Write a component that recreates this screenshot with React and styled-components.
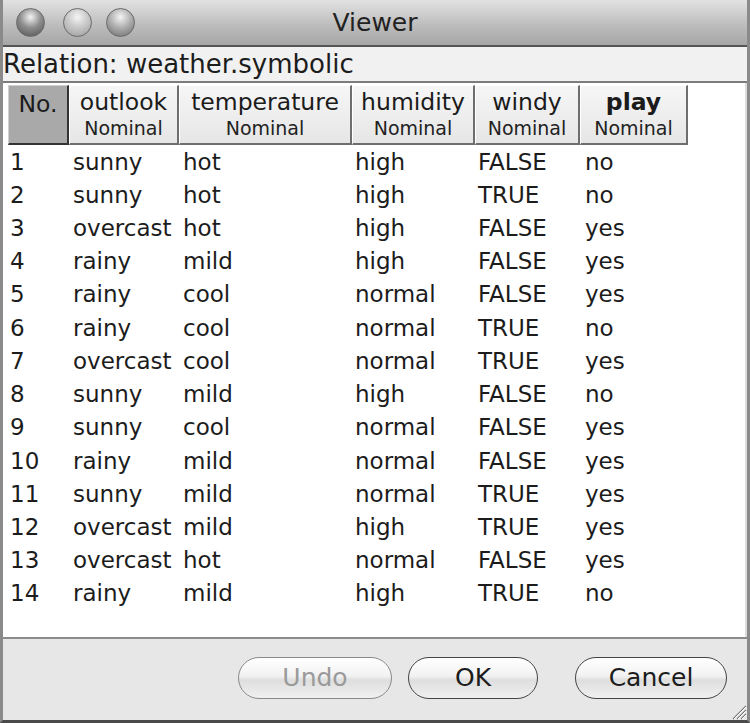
import React from 'react';
import styled, { createGlobalStyle } from 'styled-components';

const GlobalStyle = createGlobalStyle`
	html, body {
		margin: 0;
		padding: 0;
		background: #7a7a7a;
	}
	body {
		font-family: "DejaVu Sans", "Liberation Sans", sans-serif;
		color: #1a1a1a;
	}
`;

const Window = styled.div`
	width: 750px;
	height: 723px;
	display: flex;
	flex-direction: column;
	background: #e9e9e9;
	box-sizing: border-box;
	border-left: 3px solid #8a8a8a;
	border-right: 3px solid #8a8a8a;
	border-bottom: 3px solid #4a4a4a;
	overflow: hidden;
`;

const TitleBar = styled.div`
	height: 45px;
	flex: none;
	display: flex;
	align-items: center;
	position: relative;
	background: linear-gradient(#e2e2e2, #bdbdbd 55%, #a6a6a6);
	border-bottom: 2px solid #555;
	margin: 0 -3px;
	padding-left: 16px;
`;

const Light = styled.div`
	width: 29px;
	height: 29px;
	border-radius: 50%;
	box-sizing: border-box;
	border: 1px solid #6a6a6a;
	background: radial-gradient(circle at 50% 30%, #f4f4f4 0%, ${p => p.$tone} 45%, ${p => p.$edge} 100%);
	margin-right: ${p => p.$gap || 0}px;
`;

const Title = styled.div`
	position: absolute;
	left: 0;
	right: 0;
	text-align: center;
	font-size: 25px;
	color: #222;
	pointer-events: none;
`;

const RelationBar = styled.div`
	height: 34px;
	flex: none;
	display: flex;
	align-items: center;
	font-size: 26px;
	background: #f1f1f1;
	padding-left: 0;
	border-bottom: 2px solid #7c7c7c;
	color: #1c1c1c;
`;

const TablePanel = styled.div`
	flex: 1;
	background: #fff;
	padding: 2px 0 0 5px;
	border-right: 2px solid #dcdcdc;
`;

const Row = styled.div`
	display: flex;
	height: ${p => (p.$head ? '60px' : '33.23px')};
	align-items: center;
`;

const HeadCell = styled.div`
	width: ${p => p.$w}px;
	height: 60px;
	box-sizing: border-box;
	display: flex;
	flex-direction: column;
	align-items: center;
	justify-content: center;
	background: ${p => (p.$selected ? '#a9a9a9' : 'linear-gradient(#f6f6f6, #e6e6e6)')};
	border-right: 2px solid #6e6e6e;
	border-bottom: 2px solid #6e6e6e;
	border-top: 1px solid ${p => (p.$selected ? '#d0d0d0' : '#fff')};
	border-left: 1px solid ${p => (p.$selected ? '#d0d0d0' : '#fff')};
	${p => p.$selected && 'border-right-color: #333; border-bottom-color: #333;'}
`;

const HeadName = styled.div`
	font-size: 23.5px;
	line-height: 27px;
	font-weight: ${p => (p.$bold ? 700 : 400)};
	color: #1b1b1b;
	${p => p.$selected && 'margin-bottom: 20px;'}
`;

const HeadType = styled.div`
	font-size: 19px;
	line-height: 24px;
	color: #222;
`;

const Cell = styled.div`
	width: ${p => p.$w}px;
	box-sizing: border-box;
	padding-left: ${p => p.$pad}px;
	font-size: 23px;
	white-space: nowrap;
	color: #1c1c1c;
`;

const ButtonBar = styled.div`
	height: 81px;
	flex: none;
	display: flex;
	align-items: center;
	justify-content: flex-end;
	padding-right: 20px;
	border-top: 2px solid #8c8c8c;
	background: #e7e7e7;
	position: relative;
`;

const Button = styled.button`
	width: ${p => p.$w}px;
	height: 42px;
	margin-left: ${p => p.$ml}px;
	border-radius: 21px;
	border: 1.5px solid ${p => (p.$disabled ? '#8a8a8a' : '#444')};
	background: linear-gradient(#ffffff, #f2f2f2 45%, #dedede 55%, #f0f0f0);
	font-family: "DejaVu Sans", "Liberation Sans", sans-serif;
	font-size: 25px;
	color: ${p => (p.$disabled ? '#9a9a9a' : '#1c1c1c')};
	padding: 0;
	margin-top: -4px;
`;

const Grip = styled.svg`
	position: absolute;
	right: 0;
	bottom: 0;
`;

const columns = [
	{ name: 'No.', w: 61, pad: 2 },
	{ name: 'outlook', w: 110, pad: 4 },
	{ name: 'temperature', w: 173, pad: 4 },
	{ name: 'humidity', w: 123, pad: 3 },
	{ name: 'windy', w: 105, pad: 3 },
	{ name: 'play', w: 108, pad: 5, bold: true },
];

const data = [
	['sunny', 'hot', 'high', 'FALSE', 'no'],
	['sunny', 'hot', 'high', 'TRUE', 'no'],
	['overcast', 'hot', 'high', 'FALSE', 'yes'],
	['rainy', 'mild', 'high', 'FALSE', 'yes'],
	['rainy', 'cool', 'normal', 'FALSE', 'yes'],
	['rainy', 'cool', 'normal', 'TRUE', 'no'],
	['overcast', 'cool', 'normal', 'TRUE', 'yes'],
	['sunny', 'mild', 'high', 'FALSE', 'no'],
	['sunny', 'cool', 'normal', 'FALSE', 'yes'],
	['rainy', 'mild', 'normal', 'FALSE', 'yes'],
	['sunny', 'mild', 'normal', 'TRUE', 'yes'],
	['overcast', 'mild', 'high', 'TRUE', 'yes'],
	['overcast', 'hot', 'normal', 'FALSE', 'yes'],
	['rainy', 'mild', 'high', 'TRUE', 'no'],
];

export default function App() {
	return (
		<>
			<GlobalStyle />
			<Window>
				<TitleBar>
					<Light $tone="#8f8f8f" $edge="#4f4f4f" $gap={18} />
					<Light $tone="#c8c8c8" $edge="#9a9a9a" $gap={14} />
					<Light $tone="#b0b0b0" $edge="#6a6a6a" />
					<Title>Viewer</Title>
				</TitleBar>
				<RelationBar>Relation: weather.symbolic</RelationBar>
				<TablePanel>
					<Row $head>
						{columns.map((c, i) => (
							<HeadCell key={c.name} $w={c.w} $selected={i === 0}>
								<HeadName $bold={c.bold} $selected={i === 0}>{c.name}</HeadName>
								{i > 0 && <HeadType>Nominal</HeadType>}
							</HeadCell>
						))}
					</Row>
					{data.map((r, idx) => (
						<Row key={idx}>
							{[String(idx + 1), ...r].map((v, i) => (
								<Cell key={i} $w={columns[i].w} $pad={columns[i].pad}>{v}</Cell>
							))}
						</Row>
					))}
				</TablePanel>
				<ButtonBar>
					<Button $w={154} $ml={0} $disabled>Undo</Button>
					<Button $w={130} $ml={16}>OK</Button>
					<Button $w={152} $ml={37}>Cancel</Button>
					<Grip width="18" height="18" viewBox="0 0 18 18">
						<path d="M17 4 L4 17 M17 8 L8 17 M17 12 L12 17" stroke="#777" strokeWidth="1.2" />
						<path d="M17 5 L5 17 M17 9 L9 17 M17 13 L13 17" stroke="#fff" strokeWidth="1" />
					</Grip>
				</ButtonBar>
			</Window>
		</>
	);
}
